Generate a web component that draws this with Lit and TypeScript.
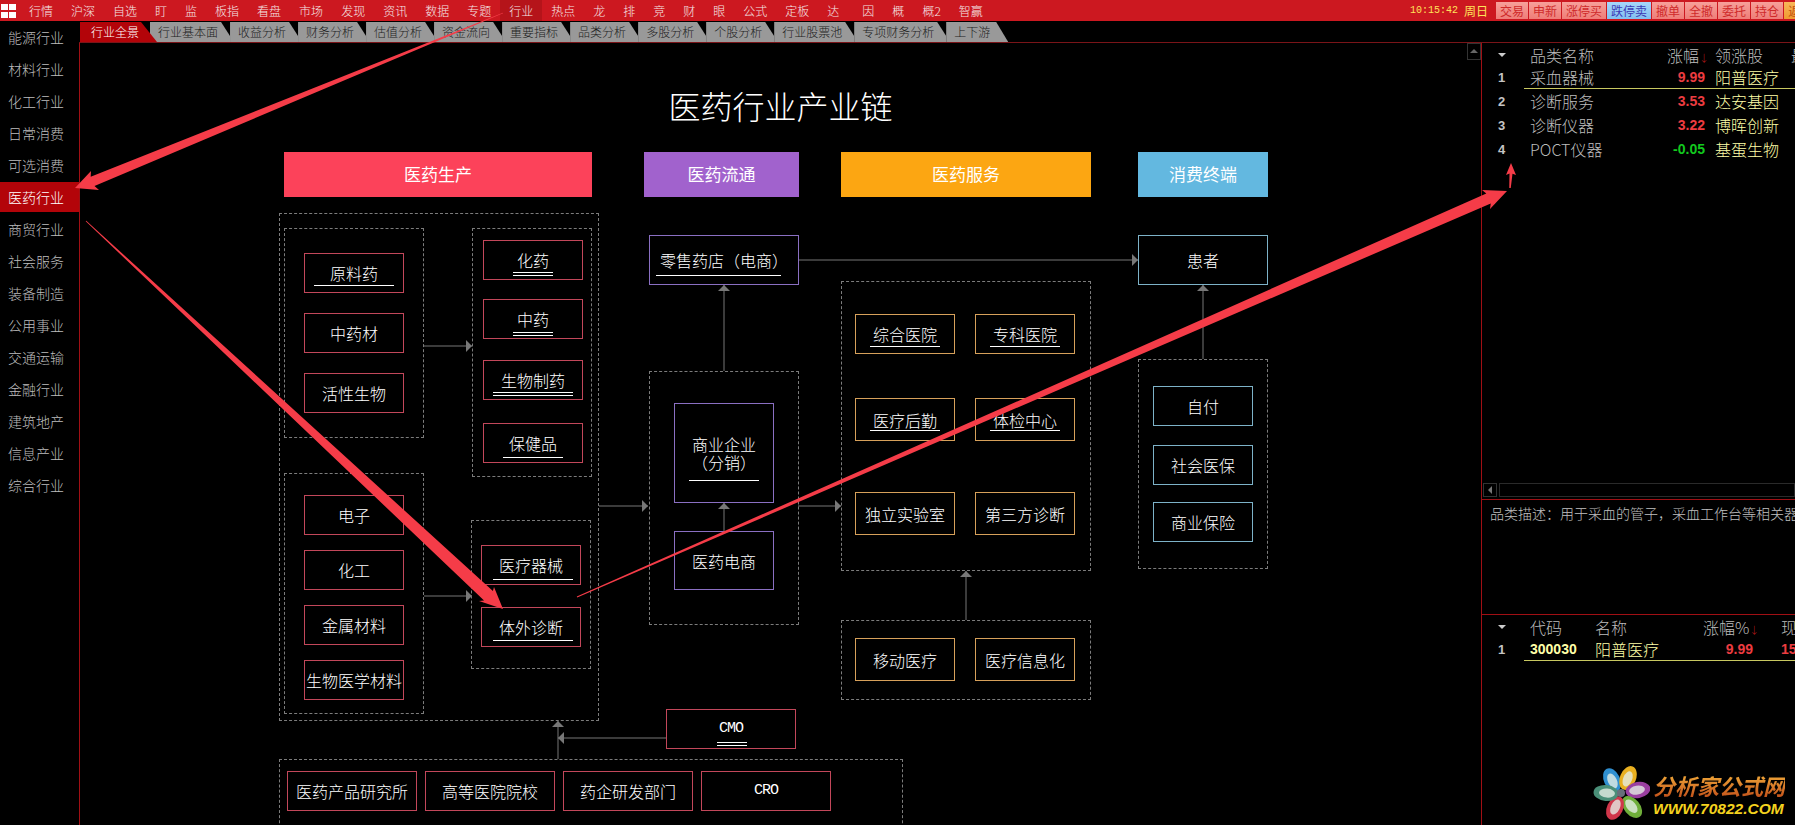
import { LitElement, html, css, svg } from "lit";
import { customElement } from "lit/decorators.js";

const MENU = ["行情","沪深","自选","盯","监","板指","看盘","市场","发现","资讯","数据","专题","行业","热点","龙","排","竞","财","眼","公式","定板","达","因","概","概2","智赢"];
const TRADE = [["交易",""],["申新",""],["涨停买",""],["跌停卖","blue"],["撤单",""],["全撤",""],["委托",""],["持仓",""],["返回","orange"]];
const TABS = ["行业全景","行业基本面","收益分析","财务分析","估值分析","资金流向","重要指标","品类分析","多股分析","个股分析","行业股票池","专项财务分析","上下游"];
const SIDE = ["能源行业","材料行业","化工行业","日常消费","可选消费","医药行业","商贸行业","社会服务","装备制造","公用事业","交通运输","金融行业","建筑地产","信息产业","综合行业"];

type U = [number, number, number, boolean?];
interface N { t: string; x: number; y: number; w: number; h: number; c: string; u?: U; mono?: boolean }

const X0 = 80, Y0 = 43;
const HEADS = [
  ["医药生产", 284, 308, "#fc425a"],
  ["医药流通", 644, 155, "#a162cd"],
  ["医药服务", 841, 250, "#fca612"],
  ["消费终端", 1138, 130, "#63b8e0"],
] as const;
const FRAMES = [
  [279,213,320,508],[284,228,140,210],[472,228,120,249],[284,473,140,241],[471,520,120,149],
  [649,371,150,254],[841,281,250,290],[841,620,250,80],[1138,359,130,210],[279,759,624,100],
];
const R = "red", P = "pur", O = "org", B = "blu";
const NODES: N[] = [
  { t:"原料药",x:304,y:253,w:100,h:40,c:R,u:[314,285,80] },
  { t:"中药材",x:304,y:313,w:100,h:40,c:R },
  { t:"活性生物",x:304,y:373,w:100,h:40,c:R },
  { t:"化药",x:483,y:240,w:100,h:40,c:R,u:[513,272,40,true] },
  { t:"中药",x:483,y:299,w:100,h:40,c:R,u:[513,332,40,true] },
  { t:"生物制药",x:483,y:360,w:100,h:40,c:R,u:[493,392,80,true] },
  { t:"保健品",x:483,y:423,w:100,h:40,c:R,u:[503,457,60] },
  { t:"电子",x:304,y:495,w:100,h:40,c:R },
  { t:"化工",x:304,y:550,w:100,h:40,c:R },
  { t:"金属材料",x:304,y:605,w:100,h:40,c:R },
  { t:"生物医学材料",x:304,y:660,w:100,h:40,c:R },
  { t:"医疗器械",x:481,y:545,w:100,h:40,c:R,u:[493,579,80] },
  { t:"体外诊断",x:481,y:607,w:100,h:40,c:R,u:[493,640,80] },
  { t:"零售药店（电商）",x:649,y:235,w:150,h:50,c:P,u:[656,275,125] },
  { t:"商业企业\n（分销）",x:674,y:403,w:100,h:100,c:P,u:[689,480,70] },
  { t:"医药电商",x:674,y:531,w:100,h:59,c:P },
  { t:"综合医院",x:855,y:314,w:100,h:40,c:O,u:[870,346,70] },
  { t:"专科医院",x:975,y:314,w:100,h:40,c:O,u:[990,346,70] },
  { t:"医疗后勤",x:855,y:398,w:100,h:43,c:O,u:[870,430,70] },
  { t:"体检中心",x:975,y:398,w:100,h:43,c:O,u:[990,430,70] },
  { t:"独立实验室",x:855,y:492,w:100,h:43,c:O },
  { t:"第三方诊断",x:975,y:492,w:100,h:43,c:O },
  { t:"移动医疗",x:855,y:638,w:100,h:43,c:O },
  { t:"医疗信息化",x:975,y:638,w:100,h:43,c:O },
  { t:"患者",x:1138,y:235,w:130,h:50,c:B },
  { t:"自付",x:1153,y:386,w:100,h:40,c:B },
  { t:"社会医保",x:1153,y:445,w:100,h:40,c:B },
  { t:"商业保险",x:1153,y:502,w:100,h:40,c:B },
  { t:"CMO",x:666,y:709,w:130,h:40,c:R,u:[717,742,30,true],mono:true },
  { t:"医药产品研究所",x:287,y:771,w:130,h:40,c:R },
  { t:"高等医院院校",x:425,y:771,w:130,h:40,c:R },
  { t:"药企研发部门",x:563,y:771,w:130,h:40,c:R },
  { t:"CRO",x:701,y:771,w:130,h:40,c:R,mono:true },
];
const LINKS = [
  [424,346,472,346],[424,596,472,596],[599,506,648,506],[798,506,841,506],[798,260,1138,260],
  [724,371,724,285],[724,531,724,503],[966,620,966,571],[1203,359,1203,285],[666,738,558,738],[558,759,558,721],
];
const RED_ARROWS: { tail:[number,number]; tip:[number,number]; a:[number,number]; b:[number,number]; neck:number; tw:number }[] = [
  { tail:[503,13], tip:[75,188], a:[91,171], b:[99,190], neck:10, tw:0.5 },
  { tail:[86,221], tip:[503,609], a:[494,587], b:[479,601], neck:13, tw:0.8 },
  { tail:[577,597], tip:[1507,191], a:[1482,190], b:[1490,209], neck:11, tw:1 },
  { tail:[1510,188], tip:[1511,163], a:[1506,175], b:[1516,175], neck:3, tw:1.5 },
];

function arrowPoints(r: typeof RED_ARROWS[number]) {
  const mx = (r.a[0] + r.b[0]) / 2, my = (r.a[1] + r.b[1]) / 2;
  const nx = mx + (r.tip[0] - mx) * 0.12, ny = my + (r.tip[1] - my) * 0.12;
  const dx = nx - r.tail[0], dy = ny - r.tail[1], l = Math.hypot(dx, dy) || 1;
  const ux = -dy / l, uy = dx / l;
  const s = (ux * (r.a[0] - nx) + uy * (r.a[1] - ny)) > 0 ? 1 : -1;
  const pts = [
    [r.tail[0] + s * ux * r.tw / 2, r.tail[1] + s * uy * r.tw / 2],
    [nx + s * ux * r.neck / 2, ny + s * uy * r.neck / 2],
    r.a,
    r.tip,
    r.b,
    [nx - s * ux * r.neck / 2, ny - s * uy * r.neck / 2],
    [r.tail[0] - s * ux * r.tw / 2, r.tail[1] - s * uy * r.tw / 2],
  ];
  return pts.map((p) => p.join(",")).join(" ");
}

function linkHead(l: number[]) {
  const [x1, y1, x2, y2] = l;
  const dx = Math.sign(x2 - x1), dy = Math.sign(y2 - y1);
  const bx = x2 - dx * 6, by = y2 - dy * 6;
  return `${x2},${y2} ${bx - dy * 6},${by - dx * 6} ${bx + dy * 6},${by + dx * 6}`;
}

@customElement("app-root")
export class AppRoot extends LitElement {
  static styles = css`
    :host { display: block; width: 1795px; height: 825px; background: #000; overflow: hidden; position: relative;
      font-family: "Noto Sans CJK SC", "Liberation Sans", sans-serif; font-weight: 300; color: #fff; }
    .top { display: flex; height: 21px; background: #cc1820; align-items: center; overflow: hidden; }
    .logo { width: 20px; flex: none; display: grid; grid-template-columns: 7px 7px; grid-auto-rows: 6px; gap: 2px 1px; padding-left: 1px; box-sizing: border-box; }
    .logo i { background: #fff; }
    .nav { flex: 1; display: flex; height: 100%; }
    .nav span { padding: 0 9px; font-size: 12px; line-height: 21px; color: #f4e6e6; white-space: nowrap; }
    .nav span.on { background: #b5141a; }
    .nav span.gap { margin-left: 5px; }
    .status { flex: none; width: 385px; display: flex; align-items: center; overflow: hidden; color: #ffe35a; }
    .time { font: 10px/21px "Liberation Mono", monospace; width: 54px; flex: none; }
    .day { font-size: 12px; width: 32px; flex: none; white-space: nowrap; font-weight: 400; }
    .btn { flex: none; margin-right: 1px; padding: 0 4px; height: 17px; line-height: 17px; font-size: 12px; font-weight: 400; color: #cf2a2a; white-space: nowrap;
      background: linear-gradient(#f7a09a, #ee7d78); }
    .btn.blue { background: linear-gradient(#a6d6fa, #82bff0); color: #3d3ab5; }
    .btn.orange { background: linear-gradient(#f8b75a, #ef9a30); color: #c24f10; }

    .body { display: flex; height: 804px; }
    .side { width: 79px; flex: none; padding-top: 1px; }
    .side div { height: 30px; margin-bottom: 2px; line-height: 30px; padding-left: 8px; font-size: 14px; color: #bdbdbd; white-space: nowrap; }
    .side div.on { background: #b30409; color: #fff; }
    .col { flex: 1; display: flex; flex-direction: column; min-width: 0; }
    .tabs { height: 22px; box-sizing: border-box; padding: 1px 0 0 1px; display: flex; border-bottom: 1px solid #7a1418; flex: none; }
    .tab { flex: none; height: 20px; line-height: 20px; padding: 0 12px 0 8px; font-size: 12px; color: #1c1c1c; background: #999; white-space: nowrap;
      clip-path: polygon(0 0, calc(100% - 9px) 0, 100% 70%, 100% 100%, 0 100%); }
    .tab.on { background: #b30409; color: #fff; padding: 0 18px 0 11px; margin-right: -7px; position: relative; z-index: 1;
      clip-path: polygon(0 0, calc(100% - 16px) 0, 100% 100%, 0 100%); }
    .tab.last { padding-right: 18px; clip-path: polygon(0 0, calc(100% - 12px) 0, 100% 100%, 0 100%); }
    .work { flex: 1; display: flex; min-height: 0; }
    .canvas { position: relative; width: 1402px; box-sizing: border-box; flex: none; border-left: 1px solid #a00f14; overflow: hidden; }
    .links { position: absolute; inset: 0; width: 100%; height: 100%; }
    .title { text-align: center; position: absolute; left: 0; width: 1401px; top: 44px; font-size: 32px; line-height: 36px; color: #fff; }
    .band { position: absolute; top: 109px; height: 45px; line-height: 43px; text-align: center; font-size: 17px; color: #fff; font-weight: 400; }
    .frame { position: absolute; box-sizing: border-box; border: 1px dashed #7c7c7c; }
    .node { position: absolute; box-sizing: border-box; border: 1px solid; display: flex; align-items: center; justify-content: center; text-align: center;
      font-size: 16px; line-height: 18px; color: #fff; white-space: pre-line; }
    .node.red { border-color: #c2475a; }
    .node.pur { border-color: #8a6fc2; }
    .node.org { border-color: #d6a05a; }
    .node.blu { border-color: #7db2c8; }
    .node.mono { font: 15px/18px "Liberation Mono", monospace; letter-spacing: -1px; }
    .ul { position: absolute; height: 1px; background: #fff; }
    .ul.dbl { box-shadow: 0 3px 0 #fff; }
    .scroll { position: absolute; right: 0; top: 0; width: 14px; height: 17px; box-sizing: border-box; border: 1px solid #333; display: flex; align-items: center; justify-content: center; }
    .scroll svg { display: block; }

    .panel { flex: 1; min-width: 0; border-left: 1px solid #a00f14; display: flex; flex-direction: column; overflow: hidden; }
    .upper { height: 457px; flex: none; display: flex; flex-direction: column; border-bottom: 1px solid #a00f14; box-sizing: border-box; }
    .t1 { flex: 1; min-height: 0; }
    .row { display: grid; position: relative; font-size: 16px; white-space: nowrap; align-items: center; box-sizing: border-box; padding-bottom: 1px; }
    .t1 .row { grid-template-columns: 48px 137px 38px 10px 76px 30px; height: 24px; }
    .t1 .row.h { height: 21px; margin-bottom: 1px; color: #bdbdbd; }
    .t2 .row { grid-template-columns: 48px 65px 108px 50px 28px 20px; height: 24px; }
    .t2 .row.h { height: 22px; color: #bdbdbd; }
    .row.sel::after { content: ""; position: absolute; left: 42px; right: 0; bottom: 0; height: 1px; background: #c8c860; }
    .tri { width: 0; height: 0; border-left: 4.5px solid transparent; border-right: 4.5px solid transparent; border-top: 4px solid #ccc; margin-left: 16px; }
    .no { padding-left: 16px; font: 700 13px "Liberation Sans", sans-serif; color: #c4c4c4; }
    .nm { color: #bdbdbd; }
    .num { font: 700 14px "Liberation Sans", sans-serif; text-align: right; }
    .num.left { text-align: left; }
    .up { color: #ec3c40; }
    .dn { color: #12c81e; }
    .yl { color: #ffffa8; }
    .r { text-align: right; }
    .down { color: #b01818; font-size: 10px; }
    .code { font: 700 14px "Liberation Sans", sans-serif; color: #ffffa8; }
    .hbar { display: flex; gap: 2px; height: 14px; margin: 0 0 2px 1px; flex: none; }
    .hbar .lb { width: 14px; flex: none; box-sizing: border-box; border: 1px solid #333; display: flex; align-items: center; justify-content: center; }
    .hbar .tk { flex: 1; box-sizing: border-box; border: 1px solid #2a2a2a; }
    .desc { height: 115px; flex: none; box-sizing: border-box; border-bottom: 1px solid #a00f14; padding: 3px 0 0 8px; font-size: 14px; line-height: 20px; color: #c0c0c0; white-space: nowrap; overflow: hidden; }
    .t2 { flex: 1; }

    .overlay { position: absolute; left: 0; top: 0; width: 1795px; height: 825px; pointer-events: none; }
    .mark { position: absolute; left: 1590px; top: 765px; width: 205px; height: 60px; display: flex; }
    .mark svg { width: 60px; height: 60px; flex: none; }
    .mtext { margin-left: 3px; padding-top: 7px; }
    .m1 { font-size: 22px; line-height: 26px; font-weight: 700; font-style: italic; white-space: nowrap;
      background: linear-gradient(#f5b23c, #c2501a); -webkit-background-clip: text; background-clip: text; color: transparent; }
    .m2 { font: italic 700 15.5px/20px "Liberation Sans", sans-serif; color: #f4d21e; white-space: nowrap; margin-top: 1px; }
  `;

  private petal(cx: number, cy: number, rot: number, col: string) {
    return svg`<g transform="rotate(${rot} ${cx} ${cy})">
      <ellipse cx=${cx} cy=${cy} rx="8" ry="12.5" fill=${col}></ellipse>
      <ellipse cx=${cx} cy=${cy + 1} rx="4.5" ry="8" fill="#e4ece4" opacity=".8"></ellipse></g>`;
  }

  render() {
    return html`
      <div class="top">
        <div class="logo"><i></i><i></i><i></i><i></i></div>
        <div class="nav">${MENU.map((m) => html`<span class="${m === "行业" ? "on" : m === "因" ? "gap" : ""}">${m}</span>`)}</div>
        <div class="status">
          <span class="time">10:15:42</span><span class="day">周日</span>
          ${TRADE.map(([t, c]) => html`<span class="btn ${c}">${t}</span>`)}
        </div>
      </div>
      <div class="body">
        <div class="side">${SIDE.map((s) => html`<div class="${s === "医药行业" ? "on" : ""}">${s}</div>`)}</div>
        <div class="col">
          <div class="tabs">${TABS.map((t, i) => html`<div class="tab ${i === 0 ? "on" : ""} ${i === TABS.length - 1 ? "last" : ""}">${t}</div>`)}</div>
          <div class="work">
            <div class="canvas">
              <div class="title">医药行业产业链</div>
              ${HEADS.map(([t, x, w, c]) => html`<div class="band" style="left:${x - X0}px;width:${w}px;background:${c}">${t}</div>`)}
              ${FRAMES.map(([x, y, w, h]) => html`<div class="frame" style="left:${x - X0}px;top:${y - Y0}px;width:${w}px;height:${h}px"></div>`)}
              <svg class="links" viewBox="${X0} ${Y0} 1401 782">
                ${LINKS.map((l) => svg`<line x1=${l[0]} y1=${l[1]} x2=${l[2]} y2=${l[3]} stroke="#777" stroke-width="1"></line><polygon points=${linkHead(l)} fill="#777"></polygon>`)}
              </svg>
              ${NODES.map((n) => html`<div class="node ${n.c} ${n.mono ? "mono" : ""}" style="left:${n.x - X0}px;top:${n.y - Y0}px;width:${n.w}px;height:${n.h}px">${n.t}${n.u
                ? html`<i class="ul ${n.u[3] ? "dbl" : ""}" style="left:${n.u[0] - n.x - 1}px;top:${n.u[1] - n.y - 1}px;width:${n.u[2]}px"></i>` : ""}</div>`)}
              <div class="scroll"><svg width="8" height="5"><polygon points="4,0 8,4 0,4" fill="#666"></polygon></svg></div>
            </div>
            <div class="panel">
              <div class="upper">
                <div class="t1">
                  <div class="row h"><i class="tri"></i><span>品类名称</span><span class="r">涨幅<span class="down">↓</span></span><span></span><span>领涨股</span><span>最新</span></div>
                  ${[["1","采血器械","9.99","阳普医疗","up"],["2","诊断服务","3.53","达安基因","up"],["3","诊断仪器","3.22","博晖创新","up"],["4","POCT仪器","-0.05","基蛋生物","dn"]].map((r, i) => html`
                    <div class="row ${i === 0 ? "sel" : ""}"><span class="no">${r[0]}</span><span class="nm">${r[1]}</span><span class="num ${r[4]}">${r[2]}</span><span></span><span class="yl">${r[3]}</span></div>`)}
                </div>
                <div class="hbar"><div class="lb"><svg width="5" height="8"><polygon points="0,4 4,0 4,8" fill="#777"></polygon></svg></div><div class="tk"></div></div>
              </div>
              <div class="desc">品类描述：用于采血的管子，采血工作台等相关器械</div>
              <div class="t2">
                <div class="row h"><i class="tri"></i><span>代码</span><span>名称</span><span class="r">涨幅%<span class="down">↓</span></span><span></span><span>现价</span></div>
                <div class="row sel"><span class="no">1</span><span class="code">300030</span><span class="yl">阳普医疗</span><span class="num up">9.99</span><span></span><span class="num up left">15.23</span></div>
              </div>
            </div>
          </div>
        </div>
      </div>
      <div class="mark">
        <svg viewBox="0 0 60 60">
          ${this.petal(22, 15, -25, "#2f8fd0")}
          ${this.petal(38, 13, 22, "#e9b020")}
          ${this.petal(48, 25, 80, "#9a3fa0")}
          ${this.petal(42, 42, 140, "#6fae3a")}
          ${this.petal(25, 43, 205, "#d0364a")}
          ${this.petal(16, 28, 275, "#4a8f78")}
          <circle cx="31" cy="28" r="4" fill="#67707a"></circle>
        </svg>
        <div class="mtext"><div class="m1">分析家公式网</div><div class="m2">WWW.70822.COM</div></div>
      </div>
      <svg class="overlay" viewBox="0 0 1795 825">
        ${RED_ARROWS.map((a) => svg`<polygon points=${arrowPoints(a)} fill="#f53c48"></polygon>`)}
      </svg>
    `;
  }
}
